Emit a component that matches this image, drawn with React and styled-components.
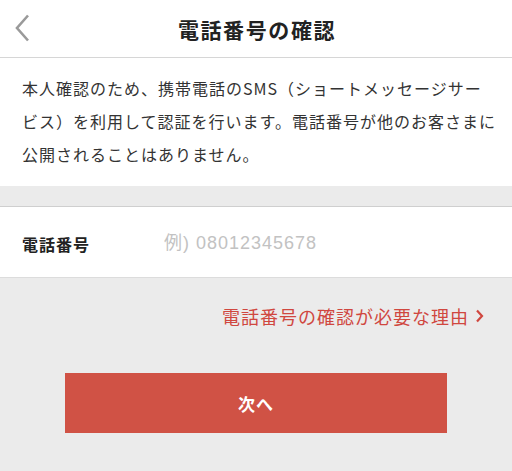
import React from 'react'
import styled, { createGlobalStyle } from 'styled-components'

const GlobalStyle = createGlobalStyle`
  html, body {
    margin: 0;
    padding: 0;
    background: #ebebeb;
  }
  body {
    font-family: "Noto Sans CJK JP", "Liberation Sans", sans-serif;
    color: #333;
  }
`;

const Page = styled.div`
  width: 512px;
  min-height: 471px;
  background: #ebebeb;
`;

const Header = styled.header`
  height: 57px;
  background: #fff;
  border-bottom: 1px solid #d6d6d6;
  display: flex;
  align-items: center;
  justify-content: center;
  position: relative;
`;

const BackButton = styled.button`
  position: absolute;
  left: 8px;
  top: 11px;
  width: 28px;
  height: 34px;
  padding: 0;
  border: none;
  background: none;
  display: flex;
  align-items: center;
  justify-content: center;
`;

const Title = styled.h1`
  margin: 0;
  padding-left: 2px;
  font-size: 21px;
  font-weight: 700;
  color: #222;
  letter-spacing: 1.6px;
`;

const Intro = styled.section`
  background: #fff;
  padding: 14px 10px 13px 22px;
  height: 101px;
`;

const IntroText = styled.p`
  margin: 0;
  font-size: 16px;
  line-height: 33px;
  color: #333;
  letter-spacing: 1px;
  white-space: nowrap;
`;

const Spacer = styled.div`
  height: 20px;
  background: #ebebeb;
  border-bottom: 1px solid #cfcfcf;
`;

const FieldRow = styled.label`
  height: 71px;
  background: #fff;
  border-bottom: 1px solid #dcdcdc;
  display: flex;
  align-items: center;
  padding: 3px 22px 0;
  box-sizing: border-box;
`;

const FieldLabel = styled.span`
  width: 142px;
  font-size: 16px;
  font-weight: 700;
  color: #222;
  letter-spacing: 1px;
`;

const FieldInput = styled.input`
  flex: 1;
  border: none;
  outline: none;
  background: none;
  padding: 0;
  font-family: "Liberation Sans", "Noto Sans CJK JP", sans-serif;
  font-size: 18px;
  letter-spacing: 1px;
  color: #333;
  &::placeholder {
    color: #c2c2c2;
  }
`;

const ReasonLink = styled.a`
  display: flex;
  justify-content: flex-end;
  align-items: center;
  gap: 6px;
  padding: 25px 28px 0 0;
  font-size: 18px;
  letter-spacing: 1px;
  color: #d0473f;
  text-decoration: none;
  line-height: 26px;
`;

const ButtonWrap = styled.div`
  display: flex;
  justify-content: center;
  padding-top: 44px;
`;

const NextButton = styled.button`
  width: 382px;
  height: 60px;
  border: none;
  border-radius: 0;
  background: #d05245;
  color: #fff;
  font-family: "Noto Sans CJK JP", sans-serif;
  font-size: 17px;
  font-weight: 700;
  letter-spacing: 1px;
`;

const App = () => {
  return (
    <Page>
      <GlobalStyle />
      <Header>
        <BackButton aria-label="戻る">
          <svg width="16" height="28" viewBox="0 0 16 28">
            <path d="M14 1.5 L3 14 L14 26.5" fill="none" stroke="#9a9a9a" strokeWidth="2.6" />
          </svg>
        </BackButton>
        <Title>電話番号の確認</Title>
      </Header>
      <Intro>
        <IntroText>
          本人確認のため、携帯電話のSMS（ショートメッセージサー<br />
          ビス）を利用して認証を行います。電話番号が他のお客さまに<br />
          公開されることはありません。
        </IntroText>
      </Intro>
      <Spacer />
      <FieldRow>
        <FieldLabel>電話番号</FieldLabel>
        <FieldInput placeholder="例) 08012345678" />
      </FieldRow>
      <ReasonLink href="#">
        電話番号の確認が必要な理由
        <svg width="9" height="14" viewBox="0 0 9 14">
          <path d="M2 1.5 L7 7 L2 12.5" fill="none" stroke="#d0473f" strokeWidth="2.2" />
        </svg>
      </ReasonLink>
      <ButtonWrap>
        <NextButton>次へ</NextButton>
      </ButtonWrap>
    </Page>
  )
};

export default App;
